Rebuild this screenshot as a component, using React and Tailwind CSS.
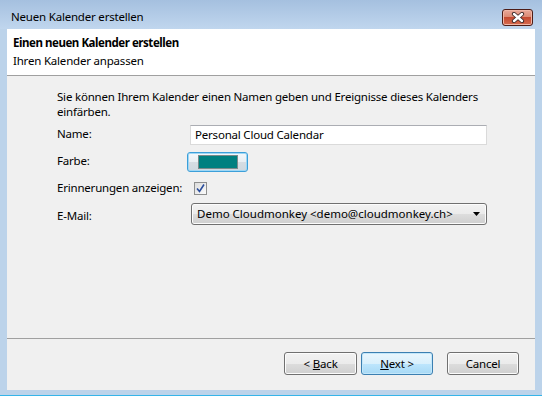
import React from "react";

const font = { fontFamily: '"Noto Sans", "Segoe UI", sans-serif' };

function WinButton({ children, focused, className = "" }) {
  return (
    <div
      className={`h-[23px] rounded-[3px] border flex items-center justify-center text-black ${
        focused
          ? "border-[#3c7fb1] bg-[linear-gradient(#eaf6fd_0%,#d9f0fc_50%,#bee6fd_50%,#a7d9f5_100%)] shadow-[inset_0_0_0_1px_#c3e7fa]"
          : "border-[#707070] bg-[linear-gradient(#f2f2f2_0%,#ebebeb_50%,#dddddd_50%,#cfcfcf_100%)] shadow-[inset_0_0_0_1px_#fcfcfc]"
      } ${className}`}
    >
      {children}
    </div>
  );
}

export default function App() {
  return (
    <div
      className="w-[542px] h-[396px] flex flex-col bg-[#bcd3ea] relative overflow-hidden text-[11.5px] tracking-[-0.2px]"
      style={font}
    >
      {/* Title bar */}
      <div className="h-[29px] flex items-start bg-[linear-gradient(#a5c0df,#c0d6ee)] relative">
        <div className="pl-[11px] pt-[9px] leading-[15px] text-black">
          Neuen Kalender erstellen
        </div>
        <div className="absolute left-[502px] top-[9px] w-[31px] h-[17px] rounded-[3px] border border-[#4d1d17] bg-[linear-gradient(#e9a99a_0%,#dc8a74_45%,#c44a31_50%,#d66b4f_100%)] shadow-[inset_0_0_0_1px_#f0b6a6] flex items-center justify-center">
          <svg width="14" height="11" viewBox="0 0 14 11">
            <path d="M3 2 L11 9 M11 2 L3 9" stroke="#3d2a2a" strokeWidth="4.2" strokeLinecap="round" />
            <path d="M3 2 L11 9 M11 2 L3 9" stroke="#ffffff" strokeWidth="2.4" strokeLinecap="round" />
          </svg>
        </div>
      </div>

      {/* Client area */}
      <div className="mx-[7px] flex flex-col flex-1 bg-[#f0f0f0]">
        {/* Header */}
        <div className="h-[47px] bg-white border-b border-[#a0a0a0] pl-[6px] pt-[6px]">
          <div className="leading-[16px] font-bold tracking-[-0.45px] text-black">
            Einen neuen Kalender erstellen
          </div>
          <div className="leading-[16px] mt-[2px] text-black">
            Ihren Kalender anpassen
          </div>
        </div>

        {/* Body */}
        <div className="flex-1 pl-[50px] pt-[13px] text-black">
          <div className="leading-[15px]">
            Sie können Ihrem Kalender einen Namen geben und Ereignisse dieses Kalenders
            <br />
            einfärben.
          </div>
          <div className="mt-[2px] flex flex-col">
            <div className="h-[27px] flex items-center">
              <div className="w-[130px] leading-[15px] -mt-[2px] whitespace-nowrap">Name:</div>
              <div className="ml-[3px] w-[297px] h-[20px] bg-white border border-[#dadada] border-t-[#abadb3] flex items-center pl-[4px] leading-[15px]">
                Personal Cloud Calendar
              </div>
            </div>
            <div className="h-[27px] flex items-center">
              <div className="w-[130px] leading-[15px] -mt-[2px] whitespace-nowrap">Farbe:</div>
              <div className="w-[61px] h-[20px] rounded-[3px] border border-[#3c9fd9] bg-[linear-gradient(#f4f8fb_0%,#e9eef2_50%,#d6dde3_50%,#cfd8df_100%)] shadow-[inset_0_0_0_1px_#9fd7f5] flex items-center justify-center">
                <div className="w-[40px] h-[14px] bg-[#008080] border border-[#7a8a8a]" />
              </div>
            </div>
            <div className="h-[27px] flex items-center">
              <div className="w-[130px] leading-[15px] -mt-[2px] whitespace-nowrap">Erinnerungen anzeigen:</div>
              <div className="ml-[7px] w-[13px] h-[13px] border border-[#8e8f8f] bg-[linear-gradient(135deg,#dcdcdc,#fbfbfb)] flex items-center justify-center">
                <svg width="9" height="9" viewBox="0 0 9 9">
                  <path d="M1 4.5 L3.5 7.5 L8 0.5" stroke="#2a4d9c" strokeWidth="1.6" fill="none" />
                </svg>
              </div>
            </div>
            <div className="h-[27px] flex items-center">
              <div className="w-[130px] leading-[15px] -mt-[1px] whitespace-nowrap">E-Mail:</div>
              <div className="ml-[4px] -mt-[4px] w-[296px] h-[22px] rounded-[3px] border border-[#707070] bg-[linear-gradient(#f2f2f2_0%,#ebebeb_50%,#dddddd_50%,#cfcfcf_100%)] shadow-[inset_0_0_0_1px_#fcfcfc] flex items-center pl-[5px] pr-[4px] leading-[15px]">
                <span className="flex-1 whitespace-nowrap tracking-[0px]">Demo Cloudmonkey &lt;demo@cloudmonkey.ch&gt;</span>
                <svg width="7" height="4" viewBox="0 0 7 4" className="mr-[2px]">
                  <path d="M0 0 H7 L3.5 4 Z" fill="#000" />
                </svg>
              </div>
            </div>
          </div>
        </div>

        {/* Button area */}
        <div className="h-[52px] border-t border-[#a0a0a0] flex items-start pt-[13px] pl-[277px]">
          <WinButton className="w-[73px]">
            &lt; <u className="ml-[3px]">B</u>ack
          </WinButton>
          <WinButton focused className="w-[72px] ml-[4px]">
            <u>N</u>ext &gt;
          </WinButton>
          <WinButton className="w-[72px] ml-[14px]">Cancel</WinButton>
        </div>
      </div>
      <div className="h-[6px]" />
      <div className="absolute left-0 right-0 bottom-0 h-[1px] bg-[#36b4e8]" />
    </div>
  );
}
